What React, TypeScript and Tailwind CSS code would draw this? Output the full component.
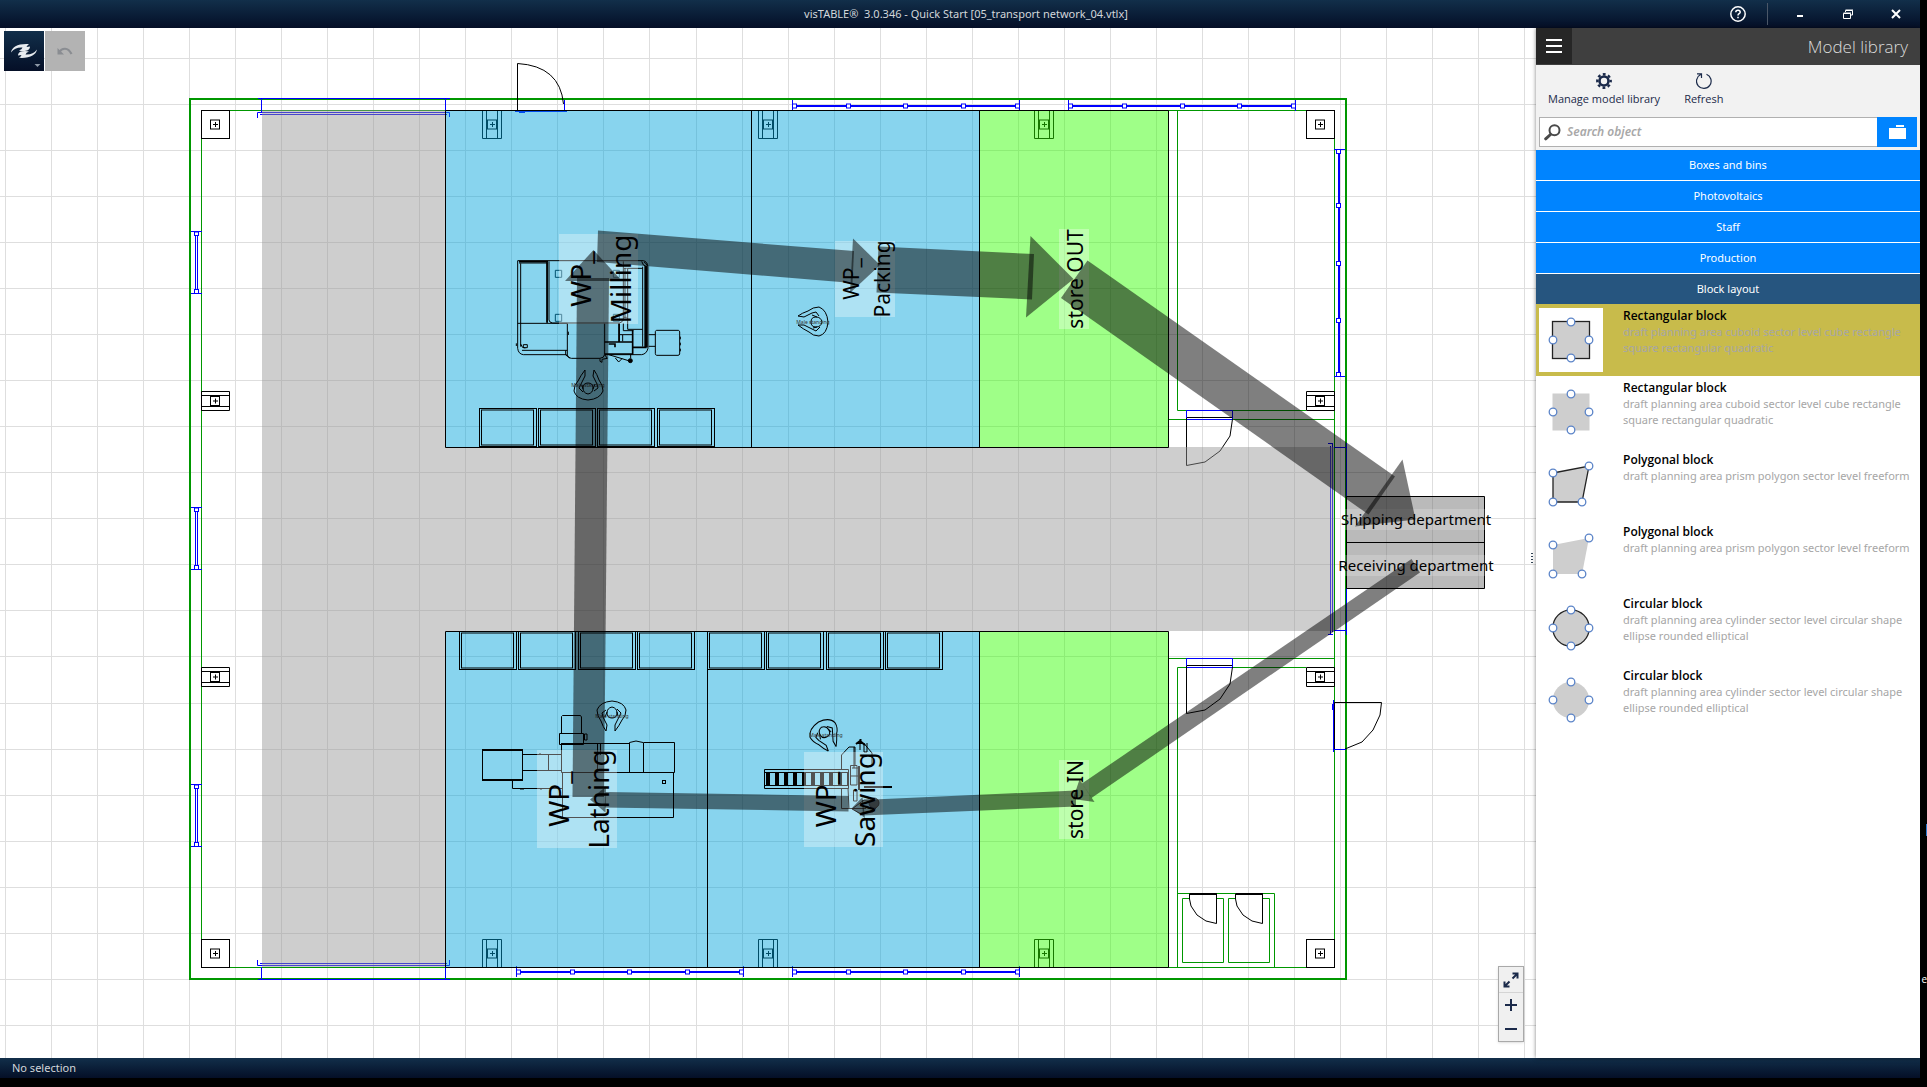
import { useState } from "react";
import type { ReactNode } from "react";

const GRID = 46.05;
const gridX = Array.from({ length: 60 }, (_, i) => Math.floor(5.3 + i * GRID) + 0.5);
const gridY = Array.from({ length: 40 }, (_, i) => Math.floor(12.3 + i * GRID) + 0.5);

const categories = ["Boxes and bins", "Photovoltaics", "Staff", "Production", "Block layout"];

type Shape = "rect" | "poly" | "circle";

const blocks: { title: string; text: string; shape: Shape; outline: boolean }[] = [
  {
    title: "Rectangular block",
    text: "draft planning area cuboid sector level cube rectangle square rectangular quadratic",
    shape: "rect",
    outline: true,
  },
  {
    title: "Rectangular block",
    text: "draft planning area cuboid sector level cube rectangle square rectangular quadratic",
    shape: "rect",
    outline: false,
  },
  {
    title: "Polygonal block",
    text: "draft planning area prism polygon sector level freeform",
    shape: "poly",
    outline: true,
  },
  {
    title: "Polygonal block",
    text: "draft planning area prism polygon sector level freeform",
    shape: "poly",
    outline: false,
  },
  {
    title: "Circular block",
    text: "draft planning area cylinder sector level circular shape ellipse rounded elliptical",
    shape: "circle",
    outline: true,
  },
  {
    title: "Circular block",
    text: "draft planning area cylinder sector level circular shape ellipse rounded elliptical",
    shape: "circle",
    outline: false,
  },
];

function BlockThumb({ shape, outline }: { shape: Shape; outline: boolean }) {
  const handles =
    shape === "poly"
      ? [
          [14, 21],
          [50, 14],
          [14, 50],
          [43, 50],
        ]
      : [
          [32, 14],
          [14, 32],
          [50, 32],
          [32, 50],
        ];
  const style = {
    fill: "#cecece",
    stroke: outline ? "#222" : "none",
    strokeWidth: 1.3,
  };
  return (
    <svg viewBox="0 0 64 64" className="h-16 w-16 shrink-0 bg-white" aria-hidden="true">
      {shape === "rect" && <rect x="13.5" y="13.5" width="37" height="37" {...style} />}
      {shape === "poly" && <path d="M14 21 50 14 43 50H14Z" {...style} />}
      {shape === "circle" && <circle cx="32" cy="32" r="18.2" {...style} />}
      {handles.map(([x, y]) => (
        <circle key={`${x}-${y}`} cx={x} cy={y} r="3.8" fill="#fff" stroke="#5b84c8" strokeWidth="1.3" />
      ))}
    </svg>
  );
}

function Pillar({ x, y, kind }: { x: number; y: number; kind: "corner" | "vertical" | "horizontal" }) {
  // x, y is the centre of the anchor plate
  return (
    <g transform={`translate(${x} ${y})`} fill="none" stroke="#000">
      {kind === "corner" && <rect x="-14" y="-14" width="28" height="28" />}
      {kind === "vertical" && <path d="M-10 -14H9V14H-10ZM-6 -14V14M5 -14V14" />}
      {kind === "horizontal" && <path d="M-14 -9.5H14V9.5H-14ZM-14 -5.5H14M-14 5.5H14" />}
      <rect x="-5" y="-4.5" width="9" height="9" />
      <path d="M-2.5 0H2.5M0 -2.5V2.5" />
    </g>
  );
}

function WindowStrip({ x1, x2, y, marks }: { x1: number; x2: number; y: number; marks: number[] }) {
  return (
    <g fill="#fff" stroke="#00f">
      <path d={`M${x1} ${y - 6}V${y + 5}M${x2} ${y - 6}V${y + 5}`} />
      <path d={`M${x1} ${y}H${x2}`} strokeWidth="2" />
      {marks.map((m) => (
        <rect key={m} x={m - 2} y={y - 2} width="4" height="4" />
      ))}
    </g>
  );
}

function SideWindow({ y }: { y: number }) {
  return (
    <g fill="none" stroke="#00f" transform={`translate(0 ${y})`}>
      <path d="M191 0H202M191 62H202M195.5 4V58M197.5 4V58" />
      <rect x="194.5" y=".5" width="4" height="3.5" />
      <rect x="194.5" y="58" width="4" height="4" />
    </g>
  );
}

function Crate({ x, y }: { x: number; y: number }) {
  return (
    <g fill="none" stroke="#000">
      <rect x={x} y={y} width="57" height="38" />
      <rect x={x + 2} y={y + 1.5} width="52" height="35" />
    </g>
  );
}

function Person({ x, y, turn }: { x: number; y: number; turn: number }) {
  return (
    <g transform={`translate(${x} ${y})`}>
      <g transform={`rotate(${turn})`} fill="none" stroke="#000">
        <path d="M-3 -15Q-7 -10 -10 -4Q-14 0 -14 6Q-12 14 0 15Q12 14 15 6Q15 0 11 -5Q9 -11 6 -15" />
        <path d="M-3 -15V-9L-7 -1L-9 3L-5 7M6 -15L5 -9L9 -1L10 3L6 6M-6 0L-5 4M7 -1L5 4" />
        <path d="M0 -2Q5 -2 5 3Q5 8 0 9Q-5 8 -5 3Q-5 -2 0 -2Z" />
      </g>
      <text textAnchor="middle" y="2" fontSize="5" fill="#333">
        Male standing
      </text>
    </g>
  );
}

function UprightLabel(props: {
  x: number;
  y: number;
  width: number;
  height: number;
  size: number;
  lines: { text: string; baseline: number }[];
}) {
  const { x, y, width, height, size, lines } = props;
  return (
    <g>
      <rect x={x} y={y} width={width} height={height} fill="#fff" fillOpacity=".32" />
      {lines.map((l) => (
        <text
          key={l.text}
          transform={`translate(${l.baseline} ${y + height / 2}) rotate(-90)`}
          textAnchor="middle"
          fontSize={size}
        >
          {l.text}
        </text>
      ))}
    </g>
  );
}

function Building() {
  return (
    <g fill="none" stroke="#009700">
      <rect x="190" y="99" width="1156" height="880" strokeWidth="2" />
      <rect x="201.5" y="110.5" width="1133" height="857" />
      <path d="M1177.5 110V410.5H1306M1168 419.5H1334" />
      <path d="M1168 658.5H1334M1306 667.5H1177.5V967" />
      <path d="M1177.5 893.5H1274.5V967" />
      <path d="M1189.5 898.5H1182.5V962.5H1223.5V898.5H1216.5M1235.5 898.5H1228.5V962.5H1269.5V898.5H1262.5" />

      <SideWindow y={231.5} />
      <SideWindow y={507.5} />
      <SideWindow y={784.5} />
      <WindowStrip x1={792.5} x2={1019.5} y={106} marks={[794.5, 848.5, 905.5, 963.5, 1017.5]} />
      <WindowStrip x1={1068.5} x2={1295.5} y={106} marks={[1070.5, 1124.5, 1182.5, 1239.5, 1293.5]} />
      <WindowStrip x1={516.5} x2={743.5} y={972} marks={[518.5, 572.5, 629.5, 687.5, 741.5]} />
      <WindowStrip x1={792.5} x2={1019.5} y={972} marks={[794.5, 848.5, 905.5, 963.5, 1017.5]} />
      <g stroke="#00f" fill="#fff">
        <path d="M1334 149.5H1345M1334 376.5H1345" />
        <path d="M1339 150V376" strokeWidth="2" />
        {[151.5, 205.5, 263.5, 320.5, 374.5].map((y) => (
          <rect key={y} x="1336.5" y={y - 2} width="4" height="4" />
        ))}
      </g>

      {/* gates */}
      <g stroke="#00f">
        <path d="M258 98.5H450M261.5 98V112M445.5 98V112M257.5 118V112.5H449.5V117M260 114.5H447" />
        <path d="M257.5 960V965.5H449.5V960M260 963.5H447M261.5 967V979M445.5 967V979M258 979.5H450" />
        <path d="M1328 443.5H1333M1328 634.5H1333M1330.5 446V634M1332.5 444V632M1334 447.5H1346.5V443M1334 630.5H1346.5V635M1346.5 447V631" />
      </g>

      {/* doors */}
      <path d="M517.5 100V110.5M564.5 100V110.5M515 111.5H567M519 112.5H525" stroke="#00f" />
      <path d="M517.5 110V63.5Q560 66 563.5 104" stroke="#000" />
      <path d="M1186.5 410.5H1232.5V419.5H1186.5ZM1186.5 658.5H1232.5V667.5H1186.5Z" stroke="#00f" />
      <path d="M1187 417.5H1232M1186.5 418V465.5L1205 462L1220 451L1230 436L1232.5 419" stroke="#000" />
      <path d="M1187 665.5H1232M1186.5 666V713.5L1205 710L1220 699L1230 684L1232.5 667" stroke="#000" />
      <path d="M1333.5 700V752M1332.5 704V710M1334 702.5H1346M1334 749.5H1346" stroke="#00f" />
      <path d="M1334.5 749V702.5H1381.5L1380 715L1373 730L1362 742L1345 749" stroke="#000" />
      <path d="M1189.5 894H1217M1235.5 894H1263" stroke="#000" strokeWidth="2" />
      <path
        d="M1189.5 894V899L1191 906L1197 915L1206 921L1216.5 923.5V894M1235.5 894V899L1237 906L1243 915L1252 921L1262.5 923.5V894"
        stroke="#000"
      />

      <Pillar x={215.5} y={124.5} kind="corner" />
      <Pillar x={1320.5} y={124.5} kind="corner" />
      <Pillar x={215.5} y={953.5} kind="corner" />
      <Pillar x={1320.5} y={953.5} kind="corner" />
      {[401, 677].map((y) => (
        <g key={y}>
          <Pillar x={215.5} y={y} kind="horizontal" />
          <Pillar x={1320.5} y={y} kind="horizontal" />
        </g>
      ))}
      {[492.5, 768.5, 1044.5].map((x) => (
        <g key={x}>
          <Pillar x={x} y={124.5} kind="vertical" />
          <Pillar x={x} y={953.5} kind="vertical" />
        </g>
      ))}
    </g>
  );
}

function Areas() {
  return (
    <g>
      <g fill="#969696" fillOpacity=".467">
        <path d="M262 110H445V447H1334V631H445V967H262Z" />
      </g>
      <g fill="#00a3da" fillOpacity=".467">
        <path d="M445.5 110.5H979.5V447.5H445.5ZM445.5 631.5H979.5V967.5H445.5Z" />
      </g>
      <g fill="#31ff00" fillOpacity=".467">
        <path d="M979.5 110.5H1168.5V447.5H979.5ZM979.5 631.5H1168.5V967.5H979.5Z" />
      </g>
      <path d="M1346.5 496.5H1484.5V588.5H1346.5Z" fill="#6b6b6b" fillOpacity=".467" />
      <path
        d="M445.5 110.5H1168.5V447.5H445.5ZM751.5 110.5V447.5M979.5 110.5V447.5M445.5 631.5H1168.5V967.5H445.5ZM707.5 631.5V967.5M979.5 631.5V967.5M1346.5 496.5H1484.5V588.5H1346.5ZM1346.5 542.5H1484.5"
        fill="none"
        stroke="#000"
      />
    </g>
  );
}

function MillingMachine() {
  return (
    <g transform="translate(500 220) scale(.33333)" fill="none" stroke="#000" strokeWidth="3">
      <path d="M53 122H430Q442 124 444 140V385Q440 402 425 404H315M53 122V385Q55 402 70 404H200M62 130V380M53 310H202" />
      <path d="M57 129H142V308M147 124V300Q148 308 158 309H358Q368 306 370 300V124" />
      <path d="M66 391H202M202 310V405Q204 415 214 415H300Q312 414 314 404V310M205 335V345M197 391V405L210 414" />
      <path d="M57 125H144M141 125V308" strokeWidth="5" />
      <path d="M438 138V382" strokeWidth="10" />
      <path d="M428 140V380M382 145H428M383 145V328H428M370 310V332H400M358 310V366M368 345V364M358 344H398" />
      <path d="M357 310V365M314 366H398V402H314M398 330V382H440M326 372H345V382" strokeWidth="5" />
      <path d="M425 124Q428 138 440 140M432 126Q440 130 442 138" />
      <path d="M446 344H466M446 379H466M470 331H536Q539 333 539 336V402Q538 406 534 406H470Q466 405 466 401V335Q467 331 470 331ZM541 350V358M541 368V376M541 386V394" />
      <path d="M314 404L322 415L306 418V427L300 424V416M326 404L366 416L356 426L346 414M366 416L392 424M392 402V415" />
      <circle cx="391" cy="422" r="6" fill="#000" />
      <path d="M70 374H82V383H70ZM62 372Q66 386 76 384M49 370V378" />
      <path d="M372 145H380M372 292H380M375 145V292" />
      <path d="M166 151H185V172H166ZM166 283H185V304H166ZM340 151H358V172H340ZM340 283H358V304H340Z" stroke="#00506e" />
    </g>
  );
}

function Lathe() {
  return (
    <g fill="none" stroke="#000" transform="translate(440 600)">
      <rect x="42.5" y="149.5" width="40" height="31" />
      <path d="M42 150H83M42 180H83" strokeWidth="2" />
      <path d="M83 154.5H121M83 170.5H121M108.5 154V170M72.5 181V188.5H122M80 189H84M100 153V154M100 189H102" />
      <path d="M121.5 133V116.5L122.5 115.5H140.5L141.5 117V133.5M119.5 133.5H143.5V144.5H119.5ZM144.5 134H147V140H144.5Z" />
      <path d="M121.5 144V172.5H234.5V142.5H203.5V172M121 143.5H190M157.5 143V172M160.5 143V155M189.5 172V142.5L196 141L203 142.5" />
      <path d="M122.5 172V217.5H233.5V172" />
      <rect x="222.5" y="180.5" width="3" height="3" />
    </g>
  );
}

function Saw() {
  return (
    <g fill="none" stroke="#000" transform="translate(440 600)">
      <path d="M324.5 169.5H408.5V188.5H324.5Z" />
      <path d="M325 172.5H408M325 185.5H408" />
      <path d="M326 179H408" strokeWidth="13" strokeDasharray="4 5" />
      <path d="M408 188L409 208.5H426M401.5 169V155L409 147H415M401.5 188V208.5H414M414 147V168M415 147V165" />
      <path d="M410.5 165.5H417V185H410.5ZM412 168H418M411 176H418M413.5 190V201H417V190ZM420 142V150M417 143.5H424L432 153V166M424 143V152H427V143" />
      <path d="M419 166V190M420.5 139V144M416 144L420 141L425 145" strokeWidth="2" />
      <path d="M424 187H452" strokeWidth="2" />
      <path d="M412 209L424 200H434L438 205L433 212L421 214Z" />
      <circle cx="434" cy="203" r="5" fill="#1e343c" />
    </g>
  );
}

function Flows() {
  return (
    <g fill="#000" fillOpacity=".5">
      <path d="M572.5 797H604L609 278H577Z" />
      <path d="M593.5 250 622 281H565Z" />
      <path d="M598 230.5 854 251 852.5 283 597 262Z" />
      <path d="M853 238.5 880 265 850 293Z" />
      <path d="M878.5 246.5 1034 254 1032 299.5 876.5 292.5Z" />
      <path d="M1030.5 236 1073.5 279 1026 317.5Z" />
      <path d="M1087.5 260.5 1395 476.5 1368.5 514.5 1061 298Z" />
      <path d="M1402.5 459.5 1415.5 519.5 1355 526.5Z" />
      <path d="M1411.5 559 1420 572.5 1091.5 798 1082 783.5Z" />
      <path d="M1079.5 779.5 1094.5 802 1073 799Z" />
      <path d="M1076 790.5V806.5L863 815.5 862 800Z" />
      <path d="M851.5 808.5 862.5 797 865 818Z" />
      <path d="M848.5 796V811.5L604.5 807.5 605.5 792Z" />
      <path d="M590 799.5 606 786.5 605.5 812.5Z" />
    </g>
  );
}

function Plan() {
  return (
    <svg
      className="absolute inset-0 h-full w-full font-['Noto_Sans',sans-serif]"
      role="img"
      aria-label="Factory layout with transport network"
    >
      <g stroke="#dedede">
        {gridX.map((x) => (
          <path key={x} d={`M${x} 0V2000`} />
        ))}
      </g>
      <g transform="translate(0 -28)">
        <g stroke="#dedede">
          {gridY.map((y) => (
            <path key={y} d={`M0 ${y}H3000`} />
          ))}
        </g>
        <Building />
        <Areas />
        {[479.5, 538.5, 597.5, 657.5].map((x) => (
          <Crate key={x} x={x} y={408.5} />
        ))}
        {[459.5, 518.5, 578.5, 637.5, 707.5, 766.5, 826.5, 885.5].map((x) => (
          <Crate key={x} x={x} y={631.5} />
        ))}
        <MillingMachine />
        <Lathe />
        <Saw />
        <Person x={588} y={385} turn={0} />
        <Person x={813} y={322} turn={-90} />
        <Person x={612} y={716} turn={180} />
        <Person x={826} y={735} turn={150} />
        <UprightLabel
          x={559}
          y={234}
          width={79}
          height={90}
          size={28}
          lines={[
            { text: "WP_", baseline: 591 },
            { text: "Milling", baseline: 631 },
          ]}
        />
        <UprightLabel
          x={835}
          y={241}
          width={60}
          height={76}
          size={21}
          lines={[
            { text: "WP_", baseline: 859 },
            { text: "Packing", baseline: 890 },
          ]}
        />
        <UprightLabel
          x={537}
          y={750}
          width={80}
          height={98}
          size={28}
          lines={[
            { text: "WP_", baseline: 569 },
            { text: "Lathing", baseline: 609 },
          ]}
        />
        <UprightLabel
          x={804}
          y={752}
          width={79}
          height={95}
          size={28}
          lines={[
            { text: "WP_", baseline: 836 },
            { text: "Sawing", baseline: 875 },
          ]}
        />
        <UprightLabel x={1059} y={229} width={30} height={100} size={21} lines={[{ text: "store OUT", baseline: 1083 }]} />
        <UprightLabel x={1059} y={760} width={30} height={79} size={21} lines={[{ text: "store IN", baseline: 1083 }]} />
        <g fill="#fff" fillOpacity=".2">
          <rect x="1340" y="509" width="151" height="21" />
          <rect x="1339" y="555" width="155" height="21" />
        </g>
        <g fontSize="15" textAnchor="middle">
          <text x="1416" y="525">
            Shipping department
          </text>
          <text x="1416" y="571">
            Receiving department
          </text>
        </g>
        <Flows />
      </g>
    </svg>
  );
}

function ToolButton({ label, children }: { label: string; children: ReactNode }) {
  return (
    <button className="flex flex-col items-center gap-1 text-[11px] leading-3 text-[#1b2a4a]">
      {children}
      {label}
    </button>
  );
}

function TitleBar() {
  return (
    <header className="relative flex h-7 shrink-0 items-center justify-end bg-linear-to-b from-[#122f4a] to-[#050f27] text-white">
      <h1 className="absolute inset-x-0 pl-3 text-center font-['Noto_Sans',sans-serif] text-[11px] leading-4 whitespace-pre text-[#d2d6da]">
        visTABLE®{"  "}3.0.346 - Quick Start [05_transport network_04.vtlx]
      </h1>
      <button aria-label="Help" className="relative mr-5">
        <svg viewBox="0 0 18 18" className="h-[18px] w-[18px]" fill="none" stroke="currentColor" strokeWidth="1.5">
          <circle cx="9" cy="9" r="7.2" />
          <path d="M6.8 7.3Q6.8 5.2 9 5.2T11.2 7.2C11.2 8.7 9 8.7 9 10.4M9 11.7V13.2" />
        </svg>
      </button>
      <span className="mr-2 h-[22px] w-px bg-[#4b5768]" />
      <button aria-label="Minimize" className="relative flex w-12 justify-center pt-1">
        <span className="h-[2px] w-[6px] bg-white" />
      </button>
      <button aria-label="Restore" className="relative flex w-12 justify-center">
        <svg viewBox="0 0 10 10" className="h-[10px] w-[10px]" fill="none" stroke="currentColor">
          <path d="M2.5 3V1.5H9.5V6H7.5M2.5 1H10M.5 9.5V4.5H7.5V9.5ZM.5 4H8" />
        </svg>
      </button>
      <button aria-label="Close" className="relative flex w-12 justify-center">
        <svg viewBox="0 0 10 10" className="h-[10px] w-[10px]" stroke="currentColor" strokeWidth="2">
          <path d="M1 1 9 9M9 1 1 9" />
        </svg>
      </button>
    </header>
  );
}

function CanvasTools() {
  return (
    <>
      <div className="absolute top-[3px] left-1 flex gap-px">
        <button aria-label="Main menu" className="relative h-10 w-10 bg-linear-to-b from-[#122f4a] to-[#050f27]">
          <svg viewBox="0 0 40 40" className="h-10 w-10" fill="#e8ecf0">
            <path id="swoosh" d="M7 21.5C8 16 14 12.5 25 13.2Q23 14.5 22.5 16L26 15.5Q26 19 22 19.8Q18 20.5 15 19.5Q18 18.5 18.5 16.5Q11 16 7 21.5Z" />
            <path
              transform="rotate(180 20 20)"
              d="M7 21.5C8 16 14 12.5 25 13.2Q23 14.5 22.5 16L26 15.5Q26 19 22 19.8Q18 20.5 15 19.5Q18 18.5 18.5 16.5Q11 16 7 21.5Z"
            />
            <path d="M30.5 33H36.5L33.5 36Z" fill="#8d98a6" />
          </svg>
        </button>
        <button aria-label="Undo" disabled className="h-10 w-10 bg-[#b3b3b3]">
          <svg viewBox="0 0 40 40" className="h-10 w-10" fill="none" stroke="#8a8d92" strokeWidth="2.2">
            <path d="M14 21.5C17 16.5 23 16 26.5 23" />
            <path d="M12.5 17V23.5H19Z" fill="#8a8d92" stroke="none" />
          </svg>
        </button>
      </div>
      <div className="absolute right-3 bottom-4 flex w-[26px] flex-col border border-[#a9a9a9] bg-[#f0f0f0] text-[#1b2a4a] shadow-sm">
        <button aria-label="Fit to view" className="flex h-[26px] items-center justify-center border-b border-[#d4d4d4]">
          <svg viewBox="0 0 16 16" className="h-4 w-4" fill="none" stroke="currentColor" strokeWidth="2">
            <path d="M9.5 6.5 14 2M9.5 1.5H14.5V6.5M6.5 9.5 2 14M1.5 9.5V14.5H6.5" />
          </svg>
        </button>
        <button aria-label="Zoom in" className="flex h-6 items-center justify-center">
          <svg viewBox="0 0 12 12" className="h-3 w-3" stroke="currentColor" strokeWidth="2">
            <path d="M0 6H12M6 0V12" />
          </svg>
        </button>
        <button aria-label="Zoom out" className="flex h-6 items-center justify-center">
          <svg viewBox="0 0 12 12" className="h-3 w-3" stroke="currentColor" strokeWidth="2">
            <path d="M0 6H12" />
          </svg>
        </button>
      </div>
      <div className="absolute top-[525px] right-[3px] flex flex-col gap-[2px]" aria-hidden="true">
        <span className="h-px w-[2px] bg-[#345]" />
        <span className="h-px w-[2px] bg-[#345]" />
        <span className="h-px w-[2px] bg-[#345]" />
        <span className="h-px w-[2px] bg-[#345]" />
      </div>
    </>
  );
}

function ModelLibrary() {
  const [category, setCategory] = useState("Block layout");
  const [selected, setSelected] = useState(0);
  const [query, setQuery] = useState("");

  return (
    <aside className="relative flex w-[384px] shrink-0 flex-col bg-white shadow-[0_0_4px_rgba(0,0,0,0.5)]">
      <div className="flex h-[37px] shrink-0 items-center justify-between bg-[#3f3f3f] pr-3">
        <button aria-label="Panel menu" className="flex h-9 w-9 flex-col items-center justify-center gap-1 self-start bg-[#262626]">
          <span className="h-[2px] w-4 bg-white" />
          <span className="h-[2px] w-4 bg-white" />
          <span className="h-[2px] w-4 bg-white" />
        </button>
        <h2 className="text-[17px] font-light text-[#dcdcdc]">Model library</h2>
      </div>

      <div className="bg-[#f2f2f2] px-[3px] pb-[3px]">
        <div className="flex h-[52px] items-start gap-6 px-[9px] pt-2">
          <ToolButton label="Manage model library">
            <svg viewBox="0 0 16 16" className="h-4 w-4" fill="none" stroke="currentColor">
              <circle cx="8" cy="8" r="4.5" strokeWidth="2.6" />
              <circle cx="8" cy="8" r="6.7" strokeWidth="2.4" strokeDasharray="2.8 2.46" strokeDashoffset="1.4" />
            </svg>
          </ToolButton>
          <ToolButton label="Refresh">
            <svg viewBox="0 0 16 16" className="h-4 w-4" fill="none" stroke="currentColor" strokeWidth="1.2">
              <path d="M10.5 1.3A7.3 7.3 0 1 1 4.7 1.5M1 .8H5.5V5" />
            </svg>
          </ToolButton>
        </div>
        <div className="flex h-[30px]">
          <label className="flex flex-1 items-center gap-[6px] border border-r-0 border-[#b0b0b0] bg-white pl-1">
            <svg viewBox="0 0 17 17" className="h-[17px] w-[17px]" fill="none" stroke="#4a4a4a" strokeLinecap="round">
              <circle cx="10.5" cy="6.2" r="5" strokeWidth="2" />
              <path d="M6.5 10.5 1.7 14.8" strokeWidth="3" />
            </svg>
            <input
              type="text"
              aria-label="Search object"
              placeholder="Search object"
              value={query}
              onChange={(e) => setQuery(e.target.value)}
              className="min-w-0 flex-1 font-['Noto_Sans',sans-serif] text-[12px] font-semibold italic outline-none placeholder:text-[#a8a8a8]"
            />
          </label>
          <button aria-label="Open folder" className="flex w-10 items-center justify-center bg-[#0084ff]">
            <svg viewBox="0 0 17 14" className="h-[14px] w-[17px]" fill="#fff">
              <path d="M0 3H17V14H0ZM7 0H15V2H7Z" />
            </svg>
          </button>
        </div>
      </div>

      <nav className="flex flex-col gap-px font-['Noto_Sans',sans-serif] text-[11px] text-white">
        {categories.map((name) => (
          <button
            key={name}
            onClick={() => setCategory(name)}
            className={name === category ? "h-[30px] bg-[#26557f] pt-px" : "h-[30px] bg-[#0084ff] pt-px"}
          >
            {name}
          </button>
        ))}
      </nav>

      <ul>
        {blocks.map((b, i) => (
          <li key={i}>
            <button
              onClick={() => setSelected(i)}
              className={
                i === selected
                  ? "flex h-[72px] w-full items-center gap-5 bg-[#c8bb4b] pl-[3px] text-left"
                  : "flex h-[72px] w-full items-center gap-5 pl-[3px] text-left"
              }
            >
              <BlockThumb shape={b.shape} outline={b.outline} />
              <span className="min-w-0 flex-1 self-start pt-1 font-['Noto_Sans',sans-serif] text-[11px] leading-4 text-[#a6a6a6]">
                <strong className="block font-['Open_Sans',sans-serif] text-[12px] leading-4 font-semibold text-black">
                  {b.title}
                </strong>
                {b.text}
              </span>
            </button>
          </li>
        ))}
      </ul>
    </aside>
  );
}

export default function App() {
  return (
    <div className="relative flex h-screen flex-col overflow-hidden bg-black pr-[7px] pb-[9px] font-['Open_Sans','Noto_Sans',sans-serif]">
      <TitleBar />
      <div className="flex min-h-0 flex-1">
        <main className="relative min-w-0 flex-1 overflow-hidden bg-white">
          <Plan />
          <CanvasTools />
        </main>
        <ModelLibrary />
      </div>
      <footer className="flex h-5 shrink-0 items-center bg-linear-to-b from-[#122f4a] to-[#050f27] px-3 font-['Noto_Sans',sans-serif] text-[11px] text-[#d2d6da]">
        No selection
      </footer>
      {/* sliver of the neighbouring window */}
      <span className="absolute right-0 bottom-[251px] h-3 w-px bg-[#2a7ad0]" aria-hidden="true" />
      <span className="absolute right-0 bottom-[98px] text-[10px] leading-5 text-white" aria-hidden="true">
        e
      </span>
    </div>
  );
}
